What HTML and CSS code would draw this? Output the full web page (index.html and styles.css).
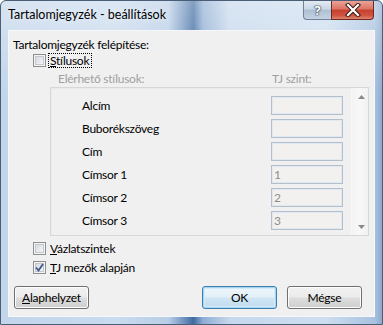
FILE: index.html
```html
<!DOCTYPE html>
<html lang="hu">
<head>
<meta charset="utf-8">
<title>Tartalomjegyzék - beállítások</title>
<link rel="stylesheet" href="styles.css">
</head>
<body>
<div class="window">
  <div class="titlebar">
    <span class="title">Tartalomjegyzék - beállítások</span>
    <div class="caption-btns">
      <div class="cap-btn help">?</div>
      <div class="cap-btn close">
        <svg width="16" height="14" viewBox="0 0 16 14">
          <path d="M3 2 L13 12 M13 2 L3 12" stroke="#3b1a16" stroke-width="4.2" stroke-linecap="square"/>
          <path d="M3 2 L13 12 M13 2 L3 12" stroke="#ffffff" stroke-width="2.2" stroke-linecap="square"/>
        </svg>
      </div>
    </div>
  </div>
  <div class="client">
    <div class="heading">Tartalomjegyzék felépítése:</div>
    <div class="check-row first">
      <span class="cb"></span>
      <span class="label focus"><u>S</u>tílusok</span>
    </div>
    <div class="col-heads">
      <span class="col-style">Elérhető stílusok:</span>
      <span class="col-level">TJ szint:</span>
    </div>
    <div class="listbox">
      <div class="rows">
        <div class="row"><span class="row-label">Alcím</span><span class="tb"></span></div>
        <div class="row"><span class="row-label">Buborékszöveg</span><span class="tb"></span></div>
        <div class="row"><span class="row-label">Cím</span><span class="tb"></span></div>
        <div class="row"><span class="row-label">Címsor 1</span><span class="tb">1</span></div>
        <div class="row"><span class="row-label">Címsor 2</span><span class="tb">2</span></div>
        <div class="row"><span class="row-label">Címsor 3</span><span class="tb">3</span></div>
      </div>
      <div class="scroll">
        <svg class="arrow" width="7" height="4" viewBox="0 0 7 4"><path d="M0 4 L3.5 0 L7 4 Z" fill="#8a8a8a"/></svg>
        <svg class="arrow" width="7" height="4" viewBox="0 0 7 4"><path d="M0 0 L3.5 4 L7 0 Z" fill="#8a8a8a"/></svg>
      </div>
    </div>
    <div class="check-row second">
      <span class="cb"></span>
      <span class="label"><u>V</u>ázlatszintek</span>
    </div>
    <div class="check-row third">
      <span class="cb checked">
        <svg width="9" height="9" viewBox="0 0 9 9"><path d="M1 4.5 L3.5 7.5 L8 1" fill="none" stroke="#3d5a8c" stroke-width="1.8"/></svg>
      </span>
      <span class="label"><u>T</u>J mezők alapján</span>
    </div>
    <div class="buttons">
      <div class="btn"><u>A</u>laphelyzet</div>
      <div class="btn-group">
        <div class="btn default">OK</div>
        <div class="btn">Mégse</div>
      </div>
    </div>
  </div>
</div>
</body>
</html>
```
FILE: styles.css
```css
* { box-sizing: border-box; }
html, body { margin: 0; padding: 0; }
body {
  width: 383px;
  height: 325px;
  overflow: hidden;
  font-family: Lato, "Noto Sans", sans-serif;
  font-size: 12px;
  color: #000;
}
.window {
  width: 383px;
  height: 325px;
  display: flex;
  flex-direction: column;
  border-radius: 6px 6px 0 0;
  border: 1px solid #4b5e78;
  background:
    linear-gradient(180deg, rgba(255,255,255,0.35) 0%, rgba(255,255,255,0) 30%),
    linear-gradient(90deg, #c2d5ea 0%, #c9dbee 30%, #b9cee6 44%, #6f92bd 48%, #3f6b9f 50.5%, #8eadd3 53%, #c6d8ec 60%, #cddef0 85%, #a9c2df 98%, #8ea9cc 100%);
}
.titlebar {
  height: 29px;
  display: flex;
  align-items: flex-start;
  padding: 0 8px 0 7px;
}
.title {
  padding-top: 6px;
  line-height: 15px;
  font-size: 12.5px;
  color: #000;
  text-shadow: 0 0 6px rgba(255,255,255,0.9);
}
.caption-btns {
  margin-left: auto;
  display: flex;
}
.cap-btn {
  height: 19px;
  display: flex;
  align-items: center;
  justify-content: center;
}
.help {
  width: 28px;
  border: 1px solid #6f8297;
  border-top: none;
  border-right: none;
  border-radius: 0 0 0 4px;
  background: linear-gradient(180deg, #e3ebf4 0%, #c9d7e6 45%, #aebfd3 50%, #c4d3e4 100%);
  color: #ffffff;
  font-family: "Noto Sans", sans-serif;
  font-weight: bold;
  font-size: 13px;
  text-shadow: 0 0 1px #2f3e52, 0 0 1px #2f3e52, 0 0 2px #2f3e52;
}
.close {
  width: 43px;
  border: 1px solid #6e2b24;
  border-top: none;
  border-radius: 0 0 4px 0;
  background: linear-gradient(180deg, #eaa296 0%, #dc7463 45%, #c8402f 50%, #cf5440 80%, #e1846e 100%);
}
.client {
  flex: 1;
  margin: 0 7px 7px 7px;
  border: 1px solid #f4f8fc;
  background: #f0f0f0;
  padding: 6px 6px 0 4px;
  display: flex;
  flex-direction: column;
  letter-spacing: -0.25px;
}
.heading {
  line-height: 15px;
}
.check-row {
  display: flex;
  align-items: center;
  height: 15px;
  margin-left: 20px;
}
.check-row.first { margin-top: 1px; }
.check-row.second { margin-top: 5px; }
.check-row.third { margin-top: 4px; }
.cb {
  width: 13px;
  height: 13px;
  border: 1px solid #8e8f8f;
  background: #f4f4f4;
  box-shadow: inset 0 0 0 1px #f4f4f4, inset 0 0 0 2px #c3c8ce;
  background-image: linear-gradient(135deg, #cfd3d9 0%, #eef0f2 70%, #f8f8f8 100%);
  display: flex;
  align-items: center;
  justify-content: center;
  flex: none;
}
.cb.checked svg { display: block; }
.label {
  margin-left: 2px;
  padding: 0 2px 0 1px;
  line-height: 13px;
  border: 1px solid transparent;
}
.label.focus {
  border: 1px dotted #000;
}
.col-heads {
  margin-top: 3px;
  line-height: 15px;
  display: flex;
  color: #a0a0a0;
}
.col-style {
  margin-left: 45px;
  width: 214px;
}
.listbox {
  margin-top: 1px;
  margin-left: 37px;
  width: 319px;
  height: 149px;
  border: 1px solid #d7d7d7;
  box-shadow: inset 1px 1px 0 #ebebeb;
  display: flex;
}
.rows {
  flex: 1;
  padding: 8px 0 0 31px;
  display: flex;
  flex-direction: column;
  gap: 4px;
}
.row {
  display: flex;
  align-items: center;
  height: 19px;
}
.row-label {
  width: 189px;
}
.tb {
  width: 72px;
  height: 19px;
  border: 1px solid #b3bfcd;
  box-shadow: inset 0 0 0 1px #e2e8ef;
  background: #f3f1f0;
  color: #8d8d8d;
  line-height: 17px;
  padding-left: 2px;
}
.scroll {
  width: 17px;
  border-left: 1px solid #f7f7f7;
  background: linear-gradient(90deg, #f3f3f3 0%, #f8f8f8 50%, #f1f1f1 100%);
  display: flex;
  flex-direction: column;
  justify-content: space-between;
  align-items: center;
  padding: 7px 0 6px 2px;
}
.arrow { display: block; }
.buttons {
  margin-top: 11px;
  display: flex;
  justify-content: space-between;
  padding: 0 6px 0 1px;
}
.btn-group {
  display: flex;
  gap: 10px;
}
.btn {
  width: 75px;
  height: 23px;
  border: 1px solid #707070;
  border-radius: 3px;
  background: linear-gradient(180deg, #f2f2f2 0%, #ebebeb 48%, #dddddd 52%, #cfcfcf 100%);
  box-shadow: inset 0 0 0 1px #fcfcfc;
  display: flex;
  align-items: center;
  justify-content: center;
  line-height: 15px;
}
.btn.default {
  border-color: #3c7fb1;
  box-shadow: inset 0 0 0 1px #a5d6f1, inset 0 0 0 2px #d3ecf9;
  background: linear-gradient(180deg, #eef6fb 0%, #e3f0f8 48%, #cfe6f4 52%, #c1dcee 100%);
}
```
